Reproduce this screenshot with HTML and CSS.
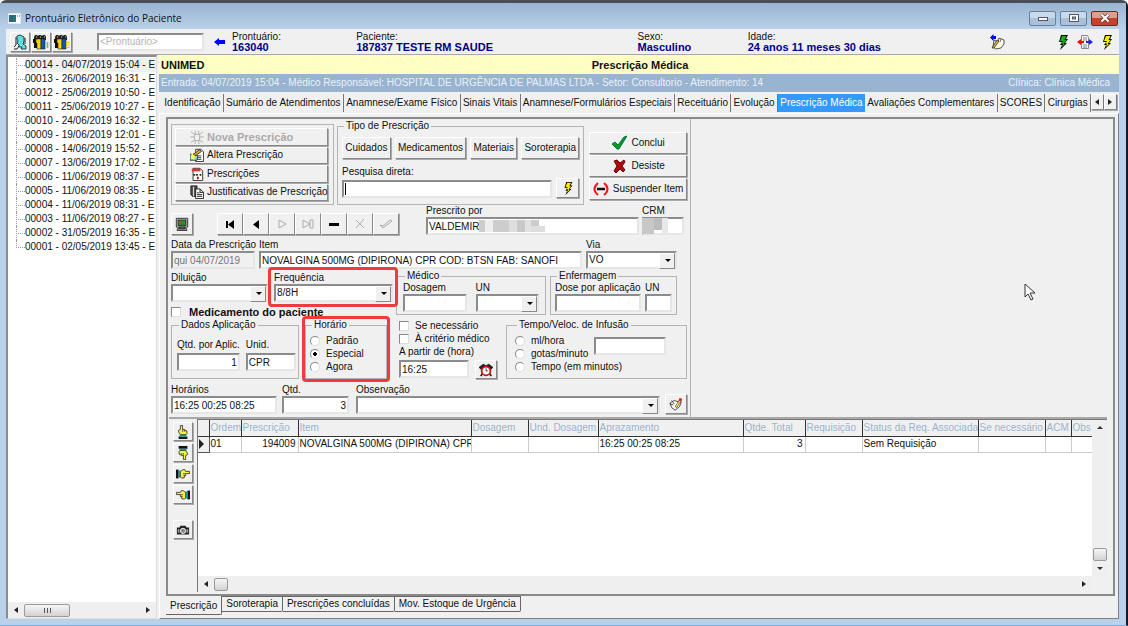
FILE: index.html
```html
<!DOCTYPE html>
<html lang="pt-BR">
<head>
  <meta charset="UTF-8">
  <meta name="viewport" content="width=device-width, initial-scale=1.0">
  <title>Prontuário Eletrônico do Paciente</title>
  <link rel="stylesheet" href="styles.css">
</head>
<body>
  <!-- Ícones usados mais de uma vez -->
  <svg class="sprite" aria-hidden="true">
    <symbol id="i-raio" viewBox="0 0 16 16">
      <path d="M6 1h7l-2 4h2l-3 4h2l-7 7 2-5H5l2-3H4z" fill="#000"/>
      <path d="M7 2h4.500l-2 4h2l-3 4h1.500l-3 3 1-3.500H6l2-2.500H5z" fill="currentColor"/>
    </symbol>
    <symbol id="i-mao" viewBox="0 0 16 16">
      <path d="M0 3h3v10H0z" fill="#111"/>
      <path d="M3 4h2v8H3z" fill="#0aa"/>
      <path d="M5 5l3-2h2l1 2h4.500v2.500H11v2h-1v2H9v1H6l-1-1z" fill="#f5f046" stroke="#111" stroke-width=".8"/>
      <path d="M8 7.500h3M8 9.500h2.500" stroke="#333" stroke-width=".7" fill="none"/>
    </symbol>
    <symbol id="i-pessoas" viewBox="0 0 16 16">
      <path d="M1 3l1-2h2l1 1 1-1h2l1 1 1-1h2l1 2v3H1z" fill="#222"/>
      <path d="M3 3h1M7 3h1M11 3h1" stroke="#ccc"/>
      <path d="M0 5h4v9H1V9H0z" fill="#111"/>
      <path d="M3 5h5v10H4V9H3z" fill="#ffd500" stroke="#222" stroke-width=".6"/>
      <path d="M8 5h4v10H8z" fill="#0a5bb5" stroke="#222" stroke-width=".6"/>
    </symbol>
  </svg>

  <div class="janela">
    <header class="titulo">
      <svg class="titulo-icone" viewBox="0 0 13 11"><rect x=".5" y=".5" width="12" height="10" fill="#fff" stroke="#dfe7ef"/><rect x="1" y="2" width="7" height="7" fill="#26766a"/><rect x="2" y="3" width="3" height="5" fill="#375b90"/><path d="M9 3h1M11 3h1" stroke="#456"/></svg>
      <h1>Prontuário Eletrônico do Paciente</h1>
      <button class="jan" aria-label="Minimizar"><svg viewBox="0 0 12 10"><rect x="1.500" y="4.500" width="9" height="3" fill="#fff" stroke="#556"/></svg></button>
      <button class="jan" aria-label="Maximizar"><svg viewBox="0 0 12 10"><rect x="1.500" y="1.500" width="9" height="7" fill="#fff" stroke="#556"/><rect x="4.500" y="4" width="3" height="2" fill="#9bb5d3" stroke="#556"/></svg></button>
      <button class="jan fechar" aria-label="Fechar"><svg viewBox="0 0 12 10"><path d="M2.500 1.500l7 7m0-7l-7 7" stroke="#533" stroke-width="3.600"/><path d="M2.500 1.500l7 7m0-7l-7 7" stroke="#fff" stroke-width="2.200"/></svg></button>
    </header>

    <div class="barra">
      <button class="btn quadrado" aria-label="Paciente"><svg viewBox="0 0 16 16"><path d="M5 2l3-1 4 2v4l-1 3 3 2v3H9l1-2-3 0 0-2-2-2 1-2-1-2z" fill="#5fe0e0" stroke="#245"/><path d="M4 3v8l-2 2M7 12l-2 3h-3M13 4v6" stroke="#222" fill="none"/></svg></button>
      <button class="btn quadrado" aria-label="Internados"><svg viewBox="0 0 16 16"><use href="#i-pessoas"/><path d="M14.500 8v6" stroke="#7b5" stroke-width="1.500"/></svg></button>
      <button class="btn quadrado" aria-label="Externos"><svg viewBox="0 0 16 16"><use href="#i-pessoas"/><path d="M15.500 8.500h-3v5h3M12.500 11h3" stroke="#e6c800" stroke-width="1.200" fill="none"/></svg></button>
      <input class="campo busca" type="text" placeholder="&lt;Prontuário&gt;" aria-label="Prontuário">
      <svg class="seta" viewBox="0 0 11 8"><path d="M0 4l5-4v2h6v4H5v2z" fill="#00f"/></svg>
      <dl class="dados">
        <div><dt>Prontuário:</dt><dd>163040</dd></div>
        <div><dt>Paciente:</dt><dd>187837 TESTE RM SAUDE</dd></div>
        <div><dt>Sexo:</dt><dd>Masculino</dd></div>
        <div><dt>Idade:</dt><dd>24 anos 11 meses 30 dias</dd></div>
      </dl>
      <div class="atalhos">
        <button class="plano afastado" aria-label="Assinar"><svg viewBox="0 0 16 16"><path d="M5 6l4 2 1-4 5 2v4l-3 4-5 1-3-2z" fill="#fffbe8" stroke="#555"/><path d="M10 4l-1 4M12 5l-1 3" stroke="#777" fill="none"/><path d="M3 14l5-8 2 1-5 7z" fill="#e8c83a" stroke="#222" stroke-width=".8"/><path d="M1 3.500L4.500 0v2H7v3H4.500v2z" fill="#00f"/></svg></button>
        <button class="plano verde" aria-label="Executar"><svg viewBox="0 0 16 16"><use href="#i-raio"/></svg></button>
        <button class="plano" aria-label="Transferir"><svg viewBox="0 0 16 16"><path d="M4.500 1.500h6l1 2v11h-7z" fill="#f4f4f4" stroke="#888"/><path d="M6 4h4M6 6h4M6 11h4M6 13h4" stroke="#888"/><path d="M0 8l4-3v2h3v2H4v2z" fill="#f00"/><path d="M16 8l-4-3v2H9v2h3v2z" fill="#22f"/></svg></button>
        <button class="plano amarelo" aria-label="Atalho"><svg viewBox="0 0 16 16"><use href="#i-raio"/></svg></button>
      </div>
    </div>

    <div class="corpo">
      <nav class="lateral">
        <ul class="arvore">
          <li><a class="atual" href="#">00014 - 04/07/2019 15:04 - E</a></li>
          <li><a href="#">00013 - 26/06/2019 16:31 - E</a></li>
          <li><a href="#">00012 - 25/06/2019 10:50 - E</a></li>
          <li><a href="#">00011 - 25/06/2019 10:27 - E</a></li>
          <li><a href="#">00010 - 24/06/2019 16:32 - E</a></li>
          <li><a href="#">00009 - 19/06/2019 12:01 - E</a></li>
          <li><a href="#">00008 - 14/06/2019 15:52 - E</a></li>
          <li><a href="#">00007 - 13/06/2019 17:02 - E</a></li>
          <li><a href="#">00006 - 11/06/2019 08:37 - E</a></li>
          <li><a href="#">00005 - 11/06/2019 08:35 - E</a></li>
          <li><a href="#">00004 - 11/06/2019 08:31 - E</a></li>
          <li><a href="#">00003 - 11/06/2019 08:27 - E</a></li>
          <li><a href="#">00002 - 31/05/2019 16:35 - E</a></li>
          <li><a href="#">00001 - 02/05/2019 13:45 - E</a></li>
        </ul>
        <div class="rolagem">
          <i class="tri esq"></i><span class="cursor-rolagem largo"></span><i class="tri dir fim"></i>
        </div>
      </nav>

      <main class="principal">
        <div class="convenio"><b>UNIMED</b><h2>Prescrição Médica</h2></div>
        <div class="entrada">
          <span>Entrada: 04/07/2019 15:04 - Médico Responsável: HOSPITAL DE URGÊNCIA DE PALMAS LTDA - Setor: Consultorio - Atendimento: 14</span>
          <span>Clínica: Clínica Médica</span>
        </div>

        <div class="abas">
          <button>Identificação</button>
          <button>Sumário de Atendimentos</button>
          <button>Anamnese/Exame Físico</button>
          <button>Sinais Vitais</button>
          <button>Anamnese/Formulários Especiais</button>
          <button>Receituário</button>
          <button>Evolução</button>
          <button class="ativa">Prescrição Médica</button>
          <button>Avaliações Complementares</button>
          <button>SCORES</button>
          <button>Cirurgias</button>
          <button class="btn passo" aria-label="Anterior"><i class="tri esq"></i></button>
          <button class="btn passo" aria-label="Próxima"><i class="tri dir"></i></button>
        </div>

        <div class="pagina">
          <section class="moldura">
            <div class="superior">
              <form class="prescricao">
                <div class="linha topo">
                  <div class="acoes">
                    <button type="button" class="btn nova" disabled><svg viewBox="0 0 16 16"><path d="M5 5h6v7H5zM1 2l4 3M15 2l-4 3M0 8h5M11 8h5M1 14l4-2M15 14l-4-2M6 1v4M10 1v4M6 12v4M10 12v4" stroke="#aaa" fill="none"/></svg>Nova Prescrição</button>
                    <button type="button" class="btn"><svg viewBox="0 0 16 16"><path d="M6.500 1.500h6l3 3v11h-9z" fill="#fff" stroke="#222"/><path d="M8 9h5M8 11h5M8 13h5" stroke="#333"/><path d="M0 7h6l3 2-1 5H0z" fill="#7fe0c8" stroke="#333"/><path d="M2 5l4 3-1 5-4-1z" fill="#ffff60"/><path d="M4 7l7-5 2 2-7 5z" fill="#e2b21b" stroke="#222"/></svg>Altera Prescrição</button>
                    <button type="button" class="btn"><svg viewBox="0 0 16 16"><path d="M3.500 1.500h8l3 3v11h-11z" fill="#fff" stroke="#222"/><path d="M2 2h10v3H2z" fill="#d33"/><path d="M4 8h2v2H4zM7 8h2v2H7zM11 8h2v2h-2z" fill="#222"/><path d="M9 11v3" stroke="#a00" stroke-width="2"/></svg>Prescrições</button>
                    <button type="button" class="btn"><svg viewBox="0 0 16 16"><path d="M1 1h7v12H3L1 11z" fill="#555" stroke="#111"/><path d="M4 2v11" stroke="#eee"/><path d="M6.500 4.500h5l4 4v7h-9z" fill="#fff" stroke="#111"/><path d="M11.500 4.500v4h4M8 9h3M8 11h6M8 13h6" stroke="#111" fill="none"/></svg>Justificativas de Prescrição</button>
                  </div>
                  <fieldset class="tipo">
                    <legend>Tipo de Prescrição</legend>
                    <div class="linha tipos">
                      <button type="button" class="btn">Cuidados</button>
                      <button type="button" class="btn">Medicamentos</button>
                      <button type="button" class="btn">Materiais</button>
                      <button type="button" class="btn">Soroterapia</button>
                    </div>
                    <label for="pesquisa">Pesquisa direta:</label>
                    <div class="linha pesquisa">
                      <span class="com-cursor"><input class="campo" id="pesquisa" type="text"></span>
                      <button type="button" class="btn amarelo" aria-label="Pesquisar"><svg viewBox="0 0 16 16"><use href="#i-raio"/></svg></button>
                    </div>
                  </fieldset>
                  <div class="confirma">
                    <button type="button" class="btn"><svg viewBox="0 0 16 16"><path d="M1 9l3-2 3 3 6-8 3-1-8 13H6z" fill="#0a9a1a" stroke="#075"/></svg>Conclui</button>
                    <button type="button" class="btn"><svg viewBox="0 0 16 16"><path d="M3 3l3-1 3 3 4-3 1 2-3 4 3 4-2 2-3-3-4 4-2-2 3-5z" fill="#a80d12" stroke="#700"/></svg>Desiste</button>
                    <button type="button" class="btn"><svg viewBox="0 0 16 16"><path d="M5 2Q-2 8 5 14M11 2q7 6 0 12" stroke="#f01818" stroke-width="2" fill="none"/><path d="M4 8h8" stroke="#111" stroke-width="2.500"/></svg>Suspender Item</button>
                  </div>
                </div>

                <div class="linha navegacao">
                  <button type="button" class="btn monitor" aria-label="Monitor"><svg viewBox="0 0 16 16"><path d="M1.500 1.500h13v10h-13zM4.500 11.500h7v2h-7zM2.500 13.500h11v2h-11z" fill="#ccc" stroke="#222"/><rect x="3.500" y="3.500" width="9" height="6" fill="#1b9a28" stroke="#222"/><path d="M6 5h1v2H6zM9 5h1v2H9z" fill="#e22"/></svg></button>
                  <div class="navegador">
                    <button type="button" class="btn" aria-label="Primeiro"><svg viewBox="0 0 14 14"><path d="M3 4h2v7H3zM11 3v9L5 7.500z"/></svg></button>
                    <button type="button" class="btn" aria-label="Anterior"><svg viewBox="0 0 14 14"><path d="M10 3v9L4 7.500z"/></svg></button>
                    <button type="button" class="btn" aria-label="Próximo" disabled><svg viewBox="0 0 14 14"><path d="M4 3v8l7-4z" fill="none" stroke="#aaa"/></svg></button>
                    <button type="button" class="btn" aria-label="Último" disabled><svg viewBox="0 0 14 14"><path d="M2 11V3l7 4zM9 3h3v8H9z" fill="none" stroke="#aaa"/></svg></button>
                    <button type="button" class="btn" aria-label="Remover"><svg viewBox="0 0 14 14"><path d="M2 6h10v3H2z"/></svg></button>
                    <button type="button" class="btn" aria-label="Cancelar" disabled><svg viewBox="0 0 14 14"><path d="M3 3l8 8M11 2l-8 9" fill="none" stroke="#aaa"/></svg></button>
                    <button type="button" class="btn" aria-label="Gravar" disabled><svg viewBox="0 0 14 14"><path d="M1 8l3 3 9-7-2-1-7 6z" fill="none" stroke="#aaa"/></svg></button>
                  </div>
                  <div class="item prescritor">
                    <label for="prescrito">Prescrito por</label>
                    <input class="campo" id="prescrito" type="text" value="VALDEMIR">
                    <svg class="mosaico" viewBox="0 0 66 12"><rect width="6" height="12" fill="#ccc"/><rect x="6" width="8" height="12" fill="#eee"/><rect x="14" width="16" height="12" fill="#cdcdcd"/><rect x="30" width="8" height="12" fill="#dedede"/><rect x="38" width="8" height="12" fill="#c9c9c9"/><rect x="46" width="6" height="12" fill="#e2e2e2"/><rect x="52" width="8" height="6" fill="#ccc"/><rect x="52" y="6" width="14" height="6" fill="#ddd"/></svg>
                  </div>
                  <div class="item crm">
                    <label for="crm">CRM</label>
                    <input class="campo" id="crm" type="text">
                    <svg class="mosaico" viewBox="0 0 26 16"><rect width="12" height="16" fill="#c8c8c8"/><rect x="12" width="8" height="12" fill="#bcbcbc"/><rect x="20" width="6" height="16" fill="#e8e8e8"/></svg>
                  </div>
                </div>

                <div class="linha medicamento">
                  <div class="item data">
                    <label for="data">Data da Prescrição</label>
                    <input class="campo" id="data" type="text" value="qui 04/07/2019" disabled>
                  </div>
                  <div class="item cresce">
                    <label for="item">Item</label>
                    <input class="campo" id="item" type="text" value="NOVALGINA 500MG (DIPIRONA) CPR COD: BTSN FAB: SANOFI">
                  </div>
                  <div class="item via">
                    <label for="via">Via</label>
                    <span class="combo"><select class="campo" id="via"><option>VO</option></select></span>
                  </div>
                </div>

                <div class="linha dosagem">
                  <div class="diluicao">
                    <div class="linha">
                      <div class="item">
                        <label for="diluicao">Diluição</label>
                        <span class="combo"><select class="campo" id="diluicao"><option></option></select></span>
                      </div>
                      <div class="item frequencia destaque">
                        <label for="frequencia">Frequência</label>
                        <span class="combo"><select class="campo" id="frequencia"><option>8/8H</option></select></span>
                      </div>
                    </div>
                    <label class="marca negrito"><input type="checkbox"> Medicamento do paciente</label>
                  </div>
                  <fieldset class="medico">
                    <legend>Médico</legend>
                    <div class="item">
                      <label for="dosagem">Dosagem</label>
                      <input class="campo" id="dosagem" type="text">
                    </div>
                    <div class="item">
                      <label for="un-medico">UN</label>
                      <span class="combo"><select class="campo" id="un-medico"><option></option></select></span>
                    </div>
                  </fieldset>
                  <fieldset class="enfermagem">
                    <legend>Enfermagem</legend>
                    <div class="item cresce">
                      <label for="dose">Dose por aplicação</label>
                      <input class="campo" id="dose" type="text">
                    </div>
                    <div class="item un">
                      <label for="un-enf">UN</label>
                      <input class="campo" id="un-enf" type="text">
                    </div>
                  </fieldset>
                </div>

                <div class="linha aplicacao">
                  <fieldset class="dados-aplicacao">
                    <legend>Dados Aplicação</legend>
                    <div class="item">
                      <label for="qtd-aplic">Qtd. por Aplic.</label>
                      <input class="campo numero" id="qtd-aplic" type="text" value="1">
                    </div>
                    <div class="item unid">
                      <label for="unid">Unid.</label>
                      <input class="campo" id="unid" type="text" value="CPR">
                    </div>
                  </fieldset>
                  <fieldset class="horario destaque">
                    <legend>Horário</legend>
                    <label class="marca"><input type="radio" name="horario"> Padrão</label>
                    <label class="marca"><input type="radio" name="horario" checked> Especial</label>
                    <label class="marca"><input type="radio" name="horario"> Agora</label>
                  </fieldset>
                  <div class="condicoes">
                    <label class="marca"><input type="checkbox"> Se necessário</label>
                    <label class="marca"><input type="checkbox"> À critério médico</label>
                    <label class="marca" for="partir">A partir de (hora)</label>
                    <div class="linha">
                      <input class="campo" id="partir" type="text" value="16:25">
                      <button type="button" class="btn" aria-label="Definir hora"><svg viewBox="0 0 16 16"><path d="M1 5l4-3 3 2 3-2 4 3-2 2H3zM2 15l2-3M14 15l-2-3" fill="#222" stroke="#222" stroke-width="2"/><circle cx="8" cy="9" r="5" fill="#fff" stroke="#d01010" stroke-width="2"/><path d="M8 6v3h2" stroke="#222" fill="none"/></svg></button>
                    </div>
                  </div>
                  <fieldset class="infusao">
                    <legend>Tempo/Veloc. de Infusão</legend>
                    <div>
                      <label class="marca"><input type="radio" name="infusao"> ml/hora</label>
                      <label class="marca"><input type="radio" name="infusao"> gotas/minuto</label>
                      <label class="marca"><input type="radio" name="infusao"> Tempo (em minutos)</label>
                    </div>
                    <input class="campo" type="text" aria-label="Valor da infusão">
                  </fieldset>
                </div>

                <div class="linha observacoes">
                  <div class="item horarios">
                    <label for="horarios">Horários</label>
                    <input class="campo" id="horarios" type="text" value="16:25 00:25 08:25">
                  </div>
                  <div class="item qtd">
                    <label for="qtd">Qtd.</label>
                    <input class="campo numero" id="qtd" type="text" value="3">
                  </div>
                  <div class="item cresce">
                    <label for="obs">Observação</label>
                    <span class="combo"><select class="campo" id="obs"><option></option></select></span>
                  </div>
                  <button type="button" class="btn" aria-label="Editar observação"><svg viewBox="0 0 16 16"><path d="M1 7l5-3 3 1 5 1-2 5-5 4-4-3z" fill="#fff" stroke="#333"/><path d="M3 4l3 4M1 8l4 1" stroke="#333"/><path d="M7 11l5-8 2 1-5 8z" fill="#f5e642" stroke="#333" stroke-width=".7"/><path d="M12 1l3 1-1 3-3-1z" fill="#e01818"/></svg></button>
                </div>
              </form>
              <div class="vazio">
                <svg class="ponteiro" viewBox="0 0 12 18"><path d="M1 1v13l3-3 3 6 2-1-3-6h5z" fill="#fff" stroke="#333"/></svg>
              </div>
            </div>

            <div class="inferior">
              <div class="maos">
                <button class="btn cima" aria-label="Subir"><svg viewBox="0 0 16 16"><use href="#i-mao"/></svg></button>
                <button class="btn baixo" aria-label="Descer"><svg viewBox="0 0 16 16"><use href="#i-mao"/></svg></button>
                <button class="btn" aria-label="Avançar"><svg viewBox="0 0 16 16"><use href="#i-mao"/></svg></button>
                <button class="btn volta" aria-label="Voltar"><svg viewBox="0 0 16 16"><use href="#i-mao"/></svg></button>
                <button class="btn foto" aria-label="Imagem"><svg viewBox="0 0 16 16"><path d="M1 5h3l1-2h6l1 2h3v8H1z" fill="#222"/><circle cx="8" cy="9" r="3" fill="#888" stroke="#fff"/><path d="M2 7h2v4H2zM12 7h2v4h-2z" fill="#999"/></svg></button>
              </div>
              <div class="grade">
                <div class="tabela-area">
                  <table>
                    <colgroup>
                      <col class="c-ind"><col class="c-ordem"><col class="c-medio"><col class="c-item"><col class="c-medio"><col class="c-und"><col class="c-apraz"><col class="c-qtde"><col class="c-medio"><col class="c-status"><col class="c-nec"><col class="c-acm"><col>
                    </colgroup>
                    <thead>
                      <tr><th></th><th>Ordem</th><th>Prescrição</th><th>Item</th><th>Dosagem</th><th>Und. Dosagem</th><th>Aprazamento</th><th>Qtde. Total</th><th>Requisição</th><th>Status da Req. Associada</th><th>Se necessário</th><th>ACM</th><th>Obs</th></tr>
                    </thead>
                    <tbody>
                      <tr><td class="indicador"><i class="tri dir grande"></i></td><td>01</td><td class="numero">194009</td><td>NOVALGINA 500MG (DIPIRONA) CPR (</td><td></td><td></td><td>16:25 00:25 08:25</td><td class="numero">3</td><td></td><td>Sem Requisição</td><td></td><td></td><td></td></tr>
                    </tbody>
                  </table>
                </div>
                <div class="rolagem vertical"><i class="tri cima-t"></i><span class="cursor-rolagem"></span><i class="tri baixo-t"></i></div>
                <div class="rolagem"><i class="tri esq"></i><span class="cursor-rolagem"></span><i class="tri dir fim"></i></div>
              </div>
            </div>
          </section>

          <div class="abas-rodape">
            <button class="ativa">Prescrição</button>
            <button>Soroterapia</button>
            <button>Prescrições concluídas</button>
            <button>Mov. Estoque de Urgência</button>
          </div>
        </div>
      </main>
    </div>
  </div>
</body>
</html>
```
FILE: styles.css
```css
* {
  box-sizing: border-box;
}
body {
  margin: 0;
  background: #fff;
  color: #111;
  font: 10px/12px "Liberation Sans", Arial, sans-serif;
}
button, input, select {
  font: inherit;
  color: inherit;
  margin: 0;
}
button {
  padding: 0;
  border: none;
  background: none;
  white-space: nowrap;
}
svg {
  display: block;
  flex: none;
}
h1, h2, dl, dt, dd, ul {
  margin: 0;
  padding: 0;
  font-size: inherit;
}
.sprite {
  display: none;
}

/* Janela */
.janela {
  height: 100vh;
  min-height: 600px;
  display: flex;
  flex-direction: column;
  padding: 0 7px 6px 6px;
  background: #b9d1ea;
  border-top: 3px solid #4a4f57;
  border-right: 2px solid #16181b;
  border-bottom: 1px solid #4cc3e0;
  border-radius: 6px 6px 0 0;
}
.titulo {
  display: flex;
  align-items: center;
  gap: 4px;
  height: 26px;
  margin: 0 -7px 0 -6px;
  padding: 4px 8px 0 8px;
  background: linear-gradient(#99b4d1, #b9d1ea);
}
.titulo h1 {
  flex: 1;
  font: 10px/14px "Open Sans", "Noto Sans", sans-serif;
}
.titulo-icone {
  width: 13px;
  height: 11px;
}
.jan {
  width: 27px;
  height: 15px;
  display: grid;
  place-items: center;
  border: 1px solid #68809c;
  border-radius: 2px;
  background: linear-gradient(#c9daec 50%, #a9c0da 50%);
}
.jan svg {
  width: 12px;
  height: 10px;
}
.fechar {
  border-color: #6b2a25;
  background: linear-gradient(#e09c8e 50%, #c4432c 50%);
}

/* Botões e campos */
.btn {
  display: flex;
  align-items: center;
  justify-content: center;
  gap: 2px;
  background: #f0f0f0;
  border: 1px solid;
  border-color: #fff #888 #888 #fff;
  box-shadow: 1px 1px 0 #aaa;
}
.btn svg {
  width: 14px;
  height: 14px;
}
.campo {
  display: block;
  width: 100%;
  height: 18px;
  padding: 0 1px;
  background: #fff;
  border: 2px solid;
  border-color: #8c8c8c #e6e6e6 #e6e6e6 #8c8c8c;
  border-radius: 0;
  outline: none;
}
.campo:disabled {
  background: #f0f0f0;
  color: #777;
}
select.campo {
  appearance: none;
}
.combo {
  display: block;
  position: relative;
}
/* botão da seta do combo */
.combo::before {
  content: "";
  position: absolute;
  top: 2px;
  right: 2px;
  width: 14px;
  height: 14px;
  background: #f0f0f0;
  border: 1px solid;
  border-color: #fff #888 #888 #fff;
  pointer-events: none;
}
.combo::after {
  content: "";
  position: absolute;
  top: 8px;
  right: 6px;
  border: 3px solid transparent;
  border-top-color: #000;
  border-bottom: none;
  pointer-events: none;
}
.numero {
  text-align: right;
}
.item {
  display: flex;
  flex-direction: column;
}
.item label {
  white-space: nowrap;
}
.linha {
  display: flex;
}
.cresce {
  flex: 1;
}
.verde {
  color: #15b015;
}
.amarelo {
  color: #ffee00;
}
.tri {
  width: 0;
  height: 0;
  border: 3px solid transparent;
}
.tri.esq {
  border-right: 4px solid #222;
  border-left: none;
}
.tri.dir {
  border-left: 4px solid #222;
  border-right: none;
}
.tri.cima-t {
  border-bottom-color: #333;
  border-top: none;
}
.tri.baixo-t {
  border-top-color: #333;
  border-bottom: none;
}
.tri.grande {
  display: block;
  border-width: 5px;
}

/* Barra superior */
.barra {
  display: flex;
  align-items: center;
  height: 26px;
  padding: 0 4px;
  background: #f0f0f0;
  border-bottom: 1px solid #a8a8a8;
}
.quadrado {
  width: 20px;
  height: 20px;
  margin-right: 1px;
}
.quadrado svg {
  width: 16px;
  height: 16px;
}
.busca {
  width: 107px;
  margin: 0 10px 0 24px;
}
.busca::placeholder {
  color: #b5b5b5;
}
.seta {
  width: 11px;
  height: 8px;
}
.dados {
  flex: 1;
  display: grid;
  grid-template-columns: 124fr 281fr 110fr 241fr;
  margin-left: 7px;
  line-height: 11px;
}
.dados dd {
  color: #00008b;
  font-weight: bold;
  font-size: 11px;
}
.atalhos {
  display: flex;
  gap: 6px;
}
.plano svg {
  width: 16px;
  height: 16px;
}
.afastado {
  margin-right: 44px;
}

/* Corpo */
.corpo {
  flex: 1;
  display: flex;
  min-height: 0;
  background: #f0f0f0;
}
.lateral {
  flex: none;
  display: flex;
  flex-direction: column;
  width: 151px;
  margin-right: 2px;
  background: #fff;
  border: 2px solid #8c8c8c;
  border-right: 1px solid #ddd;
  border-bottom: 1px solid #ddd;
}
.arvore {
  flex: 1;
  list-style: none;
  padding: 1px 0 0 8px;
}
.arvore li {
  position: relative;
  height: 14px;
  padding-left: 9px;
  white-space: nowrap;
}
/* linhas pontilhadas da árvore */
.arvore li::before {
  content: "";
  position: absolute;
  left: 0;
  top: 0;
  width: 8px;
  height: 7px;
  border-left: 1px dotted #999;
  border-bottom: 1px dotted #999;
}
.arvore li:not(:last-child)::after {
  content: "";
  position: absolute;
  left: 0;
  top: 7px;
  height: 7px;
  border-left: 1px dotted #999;
}
.arvore a {
  display: block;
  line-height: 14px;
  color: inherit;
  text-decoration: none;
}
.arvore .atual {
  background: #f0f0f0;
}
.rolagem {
  display: flex;
  align-items: center;
  gap: 6px;
  height: 16px;
  padding: 0 6px;
  background: #efefef;
}
.rolagem .fim {
  margin-left: auto;
}
.cursor-rolagem {
  width: 14px;
  height: 13px;
  border: 1px solid #9a9a9a;
  border-radius: 2px;
  background: linear-gradient(#f5f5f5, #d2d2d2);
}
.cursor-rolagem.largo {
  display: grid;
  place-items: center;
  width: 46px;
}
/* ranhuras no meio do cursor */
.cursor-rolagem.largo::before {
  content: "";
  width: 7px;
  height: 5px;
  background: repeating-linear-gradient(90deg, #555 0 1px, transparent 1px 3px);
}

/* Área principal */
.principal {
  flex: 1;
  display: flex;
  flex-direction: column;
  min-width: 0;
}
.convenio {
  display: grid;
  grid-template-columns: 1fr auto 1fr;
  align-items: center;
  height: 19px;
  padding-left: 2px;
  background: #ffffc4;
  font-size: 11px;
}
.entrada {
  display: flex;
  justify-content: space-between;
  align-items: center;
  height: 18px;
  padding: 0 9px 0 2px;
  color: #e9f0f8;
  background: #99b4d1;
  white-space: nowrap;
}
.abas {
  display: flex;
  padding: 2px 2px 0 3px;
}
.abas button {
  flex: 1 1 auto;
  height: 18px;
  border-right: 1px solid #777;
}
.abas .ativa {
  color: #fff;
  background: #3399ff;
  border: none;
}
.abas .passo {
  flex: none;
  width: 13px;
  height: 16px;
}
.pagina {
  flex: 1;
  display: flex;
  flex-direction: column;
  min-height: 0;
  margin-top: 1px;
  padding: 3px 3px 0 6px;
  border: 1px solid;
  border-color: #fff #808080 #808080 #fff;
}
.moldura {
  flex: 1;
  display: flex;
  flex-direction: column;
  min-height: 0;
  padding: 0 6px 2px 1px;
  border: 2px solid #8a8a8a;
}
.superior {
  display: flex;
  border-bottom: 2px solid #a8a8a8;
}
.vazio {
  flex: 1;
  position: relative;
}
.ponteiro {
  position: absolute;
  left: 80%;
  top: 55%;
  width: 12px;
  height: 18px;
}

/* Formulário */
.prescricao {
  width: 522px;
  padding: 1px 3px 3px 2px;
  border-right: 1px solid #b0b0b0;
}
fieldset {
  min-width: 0;
  margin: 0;
  padding: 0 4px;
  border: 1px solid #b4b4b4;
}
legend {
  margin-left: 2px;
  padding: 0 2px;
}
.marca {
  display: flex;
  align-items: center;
  height: 13px;
  white-space: nowrap;
}
.marca input {
  appearance: none;
  width: 10px;
  height: 10px;
  margin-right: 6px;
  background: #fff;
  border: 1px solid;
  border-color: #888 #ddd #ddd #888;
}
.marca input[type="radio"] {
  border-radius: 50%;
}
.marca input[type="radio"]:checked {
  background: radial-gradient(circle, #000 0 2px, #fff 2px);
}
.negrito {
  font-weight: bold;
  font-size: 11px;
}
.topo {
  gap: 3px;
}
.acoes {
  display: flex;
  flex-direction: column;
  gap: 1px;
  width: 163px;
  margin-top: 4px;
  padding: 3px 5px 3px 3px;
  border: 1px solid #b4b4b4;
}
.acoes .btn {
  flex: 1;
  justify-content: flex-start;
  padding-left: 14px;
  gap: 3px;
}
.acoes .nova {
  color: #aaa;
  font-weight: bold;
  font-size: 11px;
}
.tipo {
  width: 248px;
  margin-right: 2px;
  padding-bottom: 6px;
}
.tipo label {
  display: block;
  margin-top: 7px;
}
.tipos {
  gap: 4px;
  margin-top: 5px;
}
.tipos .btn {
  flex: 1 1 auto;
  height: 22px;
}
.pesquisa {
  gap: 4px;
  align-items: flex-end;
}
.com-cursor {
  flex: 1;
  position: relative;
}
/* cursor de texto */
.com-cursor::after {
  content: "";
  position: absolute;
  left: 3px;
  top: 3px;
  height: 12px;
  border-left: 1px solid #000;
}
.pesquisa .btn {
  width: 23px;
  height: 20px;
}
.confirma {
  width: 98px;
  display: flex;
  flex-direction: column;
  gap: 1px;
  padding-top: 12px;
}
.confirma .btn {
  height: 22px;
  gap: 4px;
}
.confirma svg {
  width: 16px;
  height: 16px;
}
.navegacao {
  align-items: flex-end;
  gap: 3px;
}
.monitor {
  width: 22px;
  height: 22px;
}
.navegador {
  display: flex;
  margin: 0 24px 0 21px;
}
.navegador .btn {
  width: 26px;
  height: 22px;
}
.prescritor, .crm {
  position: relative;
}
.prescritor {
  width: 213px;
}
.crm {
  width: 42px;
}
/* mosaico sobre os dados pessoais */
.mosaico {
  position: absolute;
  bottom: 3px;
}
.prescritor .mosaico {
  left: 53px;
  width: 66px;
  height: 12px;
}
.crm .mosaico {
  left: 0;
  bottom: 1px;
  width: 26px;
  height: 16px;
}
.medicamento {
  gap: 4px;
  margin: 4px 10px 0 0;
}
.data {
  width: 84px;
}
.via {
  width: 91px;
}
.dosagem {
  align-items: flex-start;
  margin: 1px 10px 0 0;
}
.diluicao {
  width: 225px;
  padding-top: 2px;
}
.diluicao .item {
  width: 97px;
}
.diluicao .frequencia {
  width: 119px;
  margin-left: 6px;
}
.diluicao .marca {
  margin-top: 3px;
}
.diluicao .marca input {
  margin-right: 8px;
}
.destaque {
  position: relative;
}
/* contorno vermelho de destaque */
.destaque::after {
  content: "";
  position: absolute;
  inset: -5px -5px -5px -6px;
  border: 3px solid #ee3b3b;
  border-radius: 4px;
  pointer-events: none;
}
.medico, .enfermagem {
  display: flex;
  gap: 9px;
  padding: 0 6px 2px;
}
.medico {
  width: 150px;
  margin-right: 4px;
}
.medico .item {
  flex: 1;
}
.enfermagem {
  flex: 1;
  gap: 4px;
  padding: 0 4px 2px;
}
.un {
  width: 27px;
}
.aplicacao {
  margin-top: 1px;
}
.dados-aplicacao {
  display: flex;
  width: 128px;
  gap: 6px;
  padding: 8px 6px 6px 5px;
}
.dados-aplicacao .item {
  flex: 1;
  gap: 2px;
}
.dados-aplicacao .unid {
  flex: none;
  width: 50px;
}
.horario {
  width: 82px;
  margin: 0 12px 0 6px;
  padding: 3px 4px;
}
.horario.destaque::after {
  inset: -15px -4px -4px -4px;
}
.condicoes {
  width: 98px;
  margin-right: 9px;
}
.condicoes .linha {
  gap: 6px;
  margin-top: 2px;
}
.condicoes .btn {
  flex: none;
  width: 22px;
  height: 19px;
}
.infusao {
  display: flex;
  flex: 1;
  padding: 3px 8px;
}
.infusao > .campo {
  width: 72px;
  margin-left: -28px;
  margin-top: 3px;
}
.observacoes {
  align-items: flex-end;
  gap: 5px;
  margin-top: 5px;
}
.horarios {
  width: 106px;
}
.qtd {
  width: 67px;
  margin-right: 2px;
}
.observacoes .btn {
  width: 22px;
  height: 20px;
}

/* Grade */
.inferior {
  flex: 1;
  display: flex;
  min-height: 0;
}
.maos {
  display: flex;
  flex-direction: column;
  gap: 2px;
  width: 28px;
  padding: 3px 4px;
}
.maos .btn {
  height: 19px;
}
.cima svg {
  transform: rotate(-90deg);
}
.baixo svg {
  transform: rotate(90deg);
}
.volta svg {
  transform: scaleX(-1);
}
.maos .foto {
  margin-top: 14px;
}
.grade {
  flex: 1;
  display: grid;
  grid-template: 1fr 16px / 1fr 15px;
  min-width: 0;
  border-left: 1px solid #777;
  border-top: 1px solid #777;
}
.tabela-area {
  overflow: hidden;
  background: #fff;
}
table {
  width: 100%;
  table-layout: fixed;
  border-collapse: collapse;
}
th, td {
  height: 16px;
  padding: 0 0 0 1px;
  overflow: hidden;
  white-space: nowrap;
  text-align: left;
  font-weight: normal;
  border: 1px solid #ccc;
  border-top: none;
}
th {
  background: #f0f0f0;
  color: #99b4d1;
  border-color: #333;
}
tr > :first-child {
  border-left: none;
}
tr > :last-child {
  border-right: none;
}
td.numero {
  padding-right: 2px;
  text-align: right;
}
td.indicador {
  background: #f0f0f0;
  border-color: #555;
}
.c-ind { width: 11px; }
.c-ordem { width: 32px; }
.c-medio { width: 57px; }
.c-item { width: 173px; }
.c-und { width: 70px; }
.c-apraz { width: 145px; }
.c-qtde { width: 62px; }
.c-status { width: 116px; }
.c-nec { width: 67px; }
.c-acm { width: 26px; }
.rolagem.vertical {
  flex-direction: column;
  width: 15px;
  height: auto;
  padding: 6px 0;
}
.vertical .cursor-rolagem {
  margin-top: auto;
}

/* Abas inferiores */
.abas-rodape {
  display: flex;
  align-items: flex-start;
  height: 22px;
}
.abas-rodape button {
  height: 16px;
  padding: 0 4px;
  border: 1px solid #666;
  border-left: none;
  border-radius: 0 0 2px 0;
}
.abas-rodape .ativa {
  height: 19px;
  padding: 2px 4px 0;
  border-top: none;
}
```
